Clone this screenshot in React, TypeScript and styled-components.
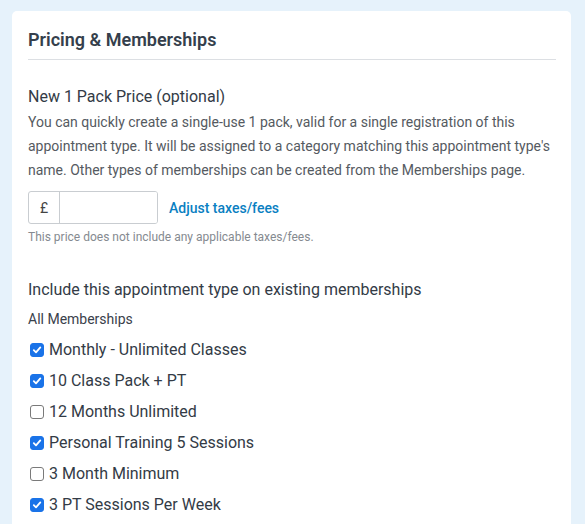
import React from 'react';
import styled, { createGlobalStyle } from 'styled-components';

const GlobalStyle = createGlobalStyle`
  html, body {
    margin: 0;
    padding: 0;
    background: #e6f2fb;
    font-family: Roboto, "Liberation Sans", sans-serif;
  }
`;

const Page = styled.div`
  padding: 11px 14px 0 12px;
  height: 524px;
  box-sizing: border-box;
  overflow: hidden;
`;

const Card = styled.section`
  background: #fff;
  border-radius: 5px;
  padding: 16px 15px 20px 16px;
  min-height: 540px;
`;

const Title = styled.h2`
  margin: 0;
  font-size: 18px;
  font-weight: 600;
  color: #353f4c;
  line-height: 26px;
  padding: 0 0 6px;
  border-bottom: 1px solid #dcdfe3;
`;

const SubHeading = styled.h3`
  margin: 24px 0 0;
  font-size: 16px;
  font-weight: 400;
  color: #333b46;
  line-height: 26px;
`;

const Description = styled.p`
  margin: 0;
  font-size: 14px;
  line-height: 24px;
  color: #555a61;
`;

const PriceRow = styled.div`
  display: flex;
  align-items: center;
  gap: 11px;
  margin-top: 9px;
`;

const InputGroup = styled.div`
  display: flex;
  width: 130px;
  height: 33px;
  box-sizing: border-box;
  border: 1px solid #c9cdd1;
  border-radius: 3px;
  overflow: hidden;
`;

const Prefix = styled.span`
  width: 30px;
  display: flex;
  align-items: center;
  justify-content: center;
  border-right: 1px solid #c9cdd1;
  font-size: 14px;
  color: #444;
`;

const PriceInput = styled.input`
  flex: 1;
  min-width: 0;
  border: none;
  outline: none;
  font: inherit;
`;

const Link = styled.a`
  font-size: 14px;
  font-weight: 500;
  color: #0a7fc2;
  text-decoration: none;
`;

const Hint = styled.div`
  margin-top: 6px;
  font-size: 12px;
  color: #858a90;
`;

const IncludeHeading = styled(SubHeading)`
  margin-top: 33px;
`;

const GroupLabel = styled.div`
  margin-top: 6px;
  font-size: 14px;
  color: #3a414b;
  line-height: 20px;
`;

const List = styled.div`
  display: flex;
  flex-direction: column;
  gap: 9px;
  margin-top: 10px;
`;

const Option = styled.label`
  display: flex;
  align-items: center;
  gap: 5px;
  font-size: 16px;
  color: #333b46;
  line-height: 22px;
`;

const Box = styled.span<{ $checked: boolean }>`
  width: 14px;
  height: 14px;
  margin-left: 2px;
  box-sizing: border-box;
  border-radius: 3px;
  display: flex;
  align-items: center;
  justify-content: center;
  background: ${(p) => (p.$checked ? '#1a73e8' : '#fff')};
  border: 1px solid ${(p) => (p.$checked ? '#1a73e8' : '#7a7a7a')};
`;

function Checkbox({ checked }: { checked: boolean }) {
  return (
    <Box $checked={checked}>
      {checked && (
        <svg width="10" height="10" viewBox="0 0 10 10">
          <path d="M1.8 5.2 L4 7.4 L8.3 2.4" fill="none" stroke="#fff" strokeWidth="1.8" strokeLinecap="round" strokeLinejoin="round" />
        </svg>
      )}
    </Box>
  );
}

const memberships = [
  { name: 'Monthly - Unlimited Classes', checked: true },
  { name: '10 Class Pack + PT', checked: true },
  { name: '12 Months Unlimited', checked: false },
  { name: 'Personal Training 5 Sessions', checked: true },
  { name: '3 Month Minimum', checked: false },
  { name: '3 PT Sessions Per Week', checked: true },
];

export default function App() {
  return (
    <>
      <GlobalStyle />
      <Page>
        <Card>
          <Title>Pricing &amp; Memberships</Title>
          <SubHeading>New 1 Pack Price (optional)</SubHeading>
          <Description>
            You can quickly create a single-use 1 pack, valid for a single registration of this
            appointment type. It will be assigned to a category matching this appointment type's
            name. Other types of memberships can be created from the Memberships page.
          </Description>
          <PriceRow>
            <InputGroup>
              <Prefix>£</Prefix>
              <PriceInput type="text" />
            </InputGroup>
            <Link href="#">Adjust taxes/fees</Link>
          </PriceRow>
          <Hint>This price does not include any applicable taxes/fees.</Hint>
          <IncludeHeading>Include this appointment type on existing memberships</IncludeHeading>
          <GroupLabel>All Memberships</GroupLabel>
          <List>
            {memberships.map((m) => (
              <Option key={m.name}>
                <Checkbox checked={m.checked} />
                {m.name}
              </Option>
            ))}
          </List>
        </Card>
      </Page>
    </>
  );
}
